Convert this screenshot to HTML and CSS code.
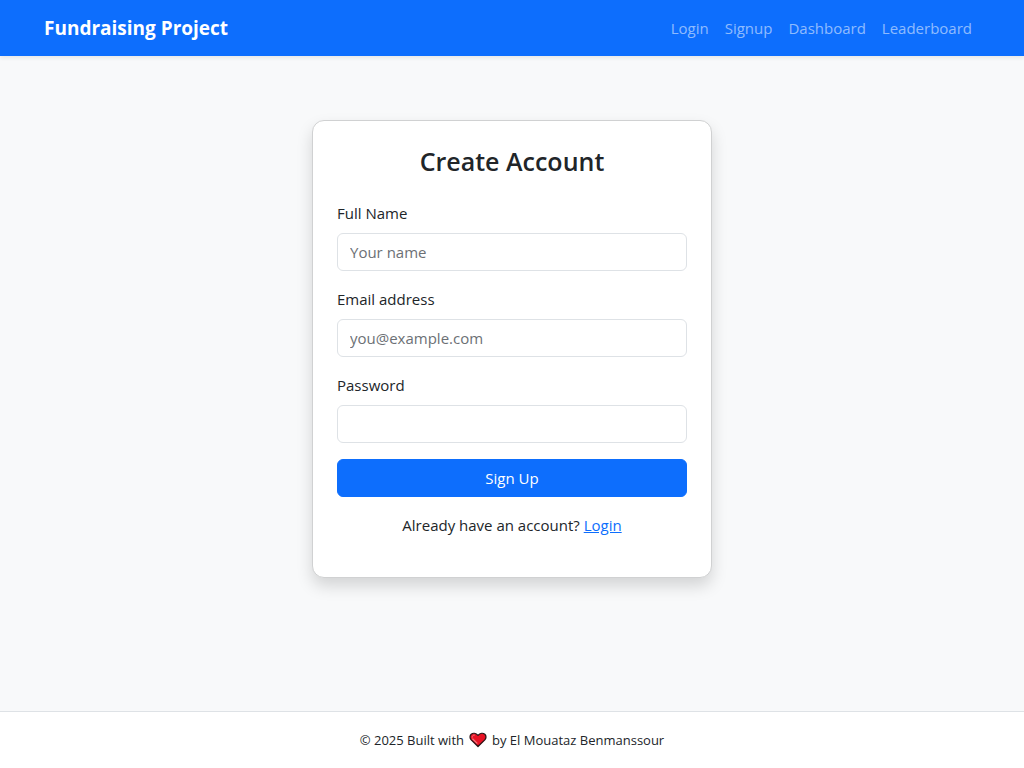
FILE: index.html
```html
<!DOCTYPE html>
<html lang="en">
<head>
  <meta charset="utf-8">
  <meta name="viewport" content="width=device-width, initial-scale=1">
  <title>Create Account - Fundraising Project</title>
  <link rel="stylesheet" href="styles.css">
</head>
<body>
  <header class="navbar">
    <div class="container">
      <a class="brand" href="#">Fundraising Project</a>
      <nav class="nav">
        <a class="nav-link" href="#">Login</a>
        <a class="nav-link" href="#">Signup</a>
        <a class="nav-link" href="#">Dashboard</a>
        <a class="nav-link" href="#">Leaderboard</a>
      </nav>
    </div>
  </header>

  <main class="main">
    <section class="card">
      <h1 class="title">Create Account</h1>
      <form>
        <div class="field">
          <label class="label" for="name">Full Name</label>
          <input class="input" id="name" type="text" placeholder="Your name">
        </div>
        <div class="field">
          <label class="label" for="email">Email address</label>
          <input class="input" id="email" type="email" placeholder="you@example.com">
        </div>
        <div class="field">
          <label class="label" for="password">Password</label>
          <input class="input" id="password" type="password">
        </div>
        <button class="button" type="submit">Sign Up</button>
      </form>
      <p class="prompt">Already have an account? <a class="link" href="#">Login</a></p>
    </section>
  </main>

  <footer class="footer">
    <span>© 2025 Built with</span>
    <svg class="heart" viewBox="0 0 18 16" role="img" aria-label="love">
      <path d="M9 14.500 2.200 7.900C.600 6.200.700 3.600 2.200 2.300 3.900.900 6.900 1 9 3.400 11.100 1 14.100.900 15.800 2.300 17.300 3.600 17.400 6.200 15.800 7.900Z" fill="#e81224" stroke="#2b1517" stroke-width="1.300" stroke-linejoin="round"/>
      <path d="M3.200 5.200C3.200 3.700 4.100 3 5.300 3.100" fill="none" stroke="#f4777f" stroke-width="1" stroke-linecap="round"/>
      <path d="M3.800 7 8 11.200" fill="none" stroke="#f4777f" stroke-width="1.200" stroke-linecap="round"/>
    </svg>
    <span>by El Mouataz Benmanssour</span>
  </footer>
</body>
</html>
```
FILE: styles.css
```css
* {
  box-sizing: border-box;
}

body {
  display: flex;
  flex-direction: column;
  min-height: 100vh;
  margin: 0;
  background: #f8f9fa;
  color: #212529;
  font-family: "Segoe UI", "Open Sans", "Noto Sans", sans-serif;
  font-size: 15px;
  line-height: 24px;
}

.navbar {
  padding: 8px 0;
  background: #0d6efd;
  box-shadow: 0 2px 4px rgba(0, 0, 0, 0.075);
}

.container {
  display: flex;
  align-items: center;
  justify-content: space-between;
  max-width: 960px;
  margin: 0 auto;
  padding: 0 12px;
}

.brand {
  color: #fff;
  font-size: 19px;
  font-weight: 700;
  line-height: 32px;
  text-decoration: none;
}

.nav {
  display: flex;
}

.nav-link {
  padding: 8px;
  color: rgba(255, 255, 255, 0.55);
  text-decoration: none;
}

.main {
  flex: 1;
  padding: 64px 12px;
}

.card {
  max-width: 400px;
  margin: 0 auto;
  padding: 24px;
  border: 1px solid #d0d1d2;
  border-radius: 12px;
  background: #fff;
  box-shadow: 0 8px 16px rgba(0, 0, 0, 0.15);
}

.title {
  margin: 0 0 24px;
  font-size: 25px;
  font-weight: 600;
  line-height: 32px;
  text-align: center;
}

.field {
  margin-bottom: 16px;
}

.label {
  display: block;
  margin-bottom: 8px;
}

.input {
  display: block;
  width: 100%;
  padding: 6px 12px;
  border: 1px solid #dee2e6;
  border-radius: 6px;
  background: #fff;
  color: #212529;
  font: inherit;
}

.input::placeholder {
  color: #6c7075;
  opacity: 1;
}

.button {
  display: block;
  width: 100%;
  padding: 6px 12px;
  border: 1px solid #0d6efd;
  border-radius: 6px;
  background: #0d6efd;
  color: #fff;
  font: inherit;
  cursor: pointer;
}

.prompt {
  margin: 16px 0;
  text-align: center;
}

.link {
  color: #0d6efd;
}

.footer {
  display: flex;
  align-items: center;
  justify-content: center;
  gap: 5px;
  padding: 16px 12px;
  border-top: 1px solid #dee2e6;
  background: #fff;
  font-size: 13px;
}

.heart {
  width: 18px;
  height: 16px;
}
```
